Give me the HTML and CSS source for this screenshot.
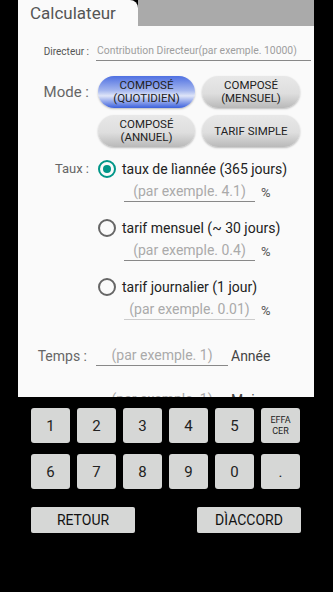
FILE: index.html
```html
<!DOCTYPE html>
<html>
<head>
	<meta charset="utf-8">
	<link rel="stylesheet" href="styles.css">
</head>
<body>
<div class="screen">
	<div class="panel">
		<div class="tabbar">
			<div class="tab">Calculateur</div>
			<div class="tabfill"></div>
		</div>
		<div class="content">
			<div class="row principal">
				<span class="label small">Directeur :</span>
				<div class="field wide">Contribution Directeur(par exemple. 10000)</div>
			</div>

			<div class="row mode">
				<span class="label big">Mode :</span>
				<div class="modes">
					<button class="pill active">COMPOSÉ<br>(QUOTIDIEN)</button>
					<button class="pill">COMPOSÉ<br>(MENSUEL)</button>
					<button class="pill">COMPOSÉ<br>(ANNUEL)</button>
					<button class="pill">TARIF SIMPLE</button>
				</div>
			</div>

			<div class="row taux">
				<span class="label mid">Taux :</span>
				<div class="rates">
					<div class="radio checked"><span class="dot"></span>taux de lìannée (365 jours)</div>
					<div class="rate-input"><div class="field center">(par exemple. 4.1)</div><span class="unit">%</span></div>
					<div class="radio"><span class="dot"></span>tarif mensuel (~ 30 jours)</div>
					<div class="rate-input"><div class="field center">(par exemple. 0.4)</div><span class="unit">%</span></div>
					<div class="radio"><span class="dot"></span>tarif journalier (1 jour)</div>
					<div class="rate-input"><div class="field center light">(par exemple. 0.01)</div><span class="unit">%</span></div>
				</div>
			</div>

			<div class="row time">
				<span class="label mid2">Temps :</span>
				<div class="field center short">(par exemple. 1)</div>
				<span class="after">Année</span>
			</div>

			<div class="row time next">
				<span class="label mid2"></span>
				<div class="field center short">(par exemple. 1)</div>
				<span class="after">Mois</span>
			</div>
		</div>
	</div>

	<div class="keypad">
		<button class="key">1</button>
		<button class="key">2</button>
		<button class="key">3</button>
		<button class="key">4</button>
		<button class="key">5</button>
		<button class="key tiny">EFFA<br>CER</button>
		<button class="key">6</button>
		<button class="key">7</button>
		<button class="key">8</button>
		<button class="key">9</button>
		<button class="key">0</button>
		<button class="key">.</button>
	</div>

	<div class="actions">
		<button class="action">RETOUR</button>
		<button class="action">DÌACCORD</button>
	</div>
</div>
</body>
</html>
```

FILE: styles.css
```css
html, body {
  margin: 0;
  background: #000;
}

body {
  font-family: Roboto, "Noto Sans", sans-serif;
  width: 333px;
  height: 592px;
  overflow: hidden;
}

button {
  font-family: Roboto, "Noto Sans", sans-serif;
  border: none;
  padding: 0;
  margin: 0;
}

.screen {
  width: 333px;
  height: 592px;
}

.panel {
  margin: 0 19px 0 18px;
}

.tabbar {
  display: flex;
  height: 26px;
}

.tab {
  width: 120px;
  background: #fafafa;
  border-top-right-radius: 8px;
  font-size: 17px;
  color: #555;
  padding-left: 12px;
  box-sizing: border-box;
  line-height: 27px;
}

.tabfill {
  flex: 1;
  background: #aaa;
}

.content {
  height: 371px;
  overflow: hidden;
  background: #fafafa;
}

.row {
  display: flex;
}

.label {
  width: 71px;
  text-align: right;
  color: #666;
  flex: none;
  white-space: pre;
}

.label.small {
  font-size: 10px;
  color: #555;
}

.label.big {
  font-size: 15px;
  line-height: 32px;
}

.label.mid {
  font-size: 13px;
  line-height: 20px;
}

.label.mid2 {
  font-size: 14px;
  width: 69px;
}

.field {
  color: #9e9e9e;
  border-bottom: 1px solid #888;
  box-sizing: border-box;
  white-space: nowrap;
}

.field.center {
  text-align: center;
  color: #aaa;
  font-size: 14px;
}

.field.light {
  border-bottom-color: #ccc;
}

/* directeur */
.principal {
  margin-top: 15px;
  align-items: center;
}

.field.wide {
  margin-left: 7px;
  width: 215px;
  font-size: 10.4px;
  height: 20px;
  line-height: 20px;
  padding-left: 1px;
}

/* mode */
.mode {
  margin-top: 15px;
}

.modes {
  margin-left: 9px;
  display: grid;
  grid-template-columns: 97px 98px;
  grid-auto-rows: 32px;
  column-gap: 7px;
  row-gap: 7px;
}

.pill {
  border-radius: 16px;
  font-size: 11.5px;
  line-height: 13px;
  color: #222;
  background: linear-gradient(#e8e8e8, #dedede 55%, #b9b9b9);
  box-shadow: 0 1px 2px rgba(0, 0, 0, 0.25);
}

.pill.active {
  background: linear-gradient(#4f70e2, #a4b6ee 45%, #dfe5f8 62%, #3b60dc);
}

/* taux */
.taux {
  margin-top: 12px;
}

.rates {
  margin-left: 9px;
}

.radio {
  display: flex;
  align-items: center;
  font-size: 14px;
  color: #222;
  height: 20px;
}

.dot {
  width: 18px;
  height: 18px;
  border: 2px solid #666;
  border-radius: 50%;
  box-sizing: border-box;
  margin-right: 6px;
  position: relative;
}

.radio.checked .dot {
  border-color: #009688;
}

.radio.checked .dot::after {
  content: "";
  position: absolute;
  left: 3px;
  top: 3px;
  width: 8px;
  height: 8px;
  border-radius: 50%;
  background: #009688;
}

.rate-input {
  display: flex;
  align-items: flex-start;
  margin: 2px 0 15px 26px;
}

.rate-input .field {
  width: 131px;
  height: 21px;
  line-height: 20px;
}

.unit {
  font-size: 13px;
  color: #555;
  margin-left: 6px;
  line-height: 20px;
  padding-top: 2px;
}

/* temps */
.time {
  margin-top: 9px;
  align-items: center;
}

.field.short {
  margin-left: 9px;
  width: 132px;
  height: 21px;
  line-height: 20px;
}

.after {
  font-size: 14px;
  color: #444;
  margin-left: 3px;
}

.time.next {
  margin-top: 23px;
}

.time.next .field {
  border-bottom: none;
}

/* keypad */
.keypad {
  display: grid;
  grid-template-columns: repeat(6, 39px);
  grid-auto-rows: 35px;
  column-gap: 7px;
  row-gap: 11px;
  padding: 11px 0 0 31px;
}

.key {
  background: #d6d7d6;
  border-radius: 3px;
  font-size: 15px;
  color: #222;
}

.key.tiny {
  font-size: 9px;
  line-height: 11px;
}

.actions {
  display: flex;
  justify-content: space-between;
  padding: 18px 32px 0 31px;
}

.action {
  width: 104px;
  height: 26px;
  background: #d6d7d6;
  border-radius: 2px;
  font-size: 14px;
  color: #111;
}
```
